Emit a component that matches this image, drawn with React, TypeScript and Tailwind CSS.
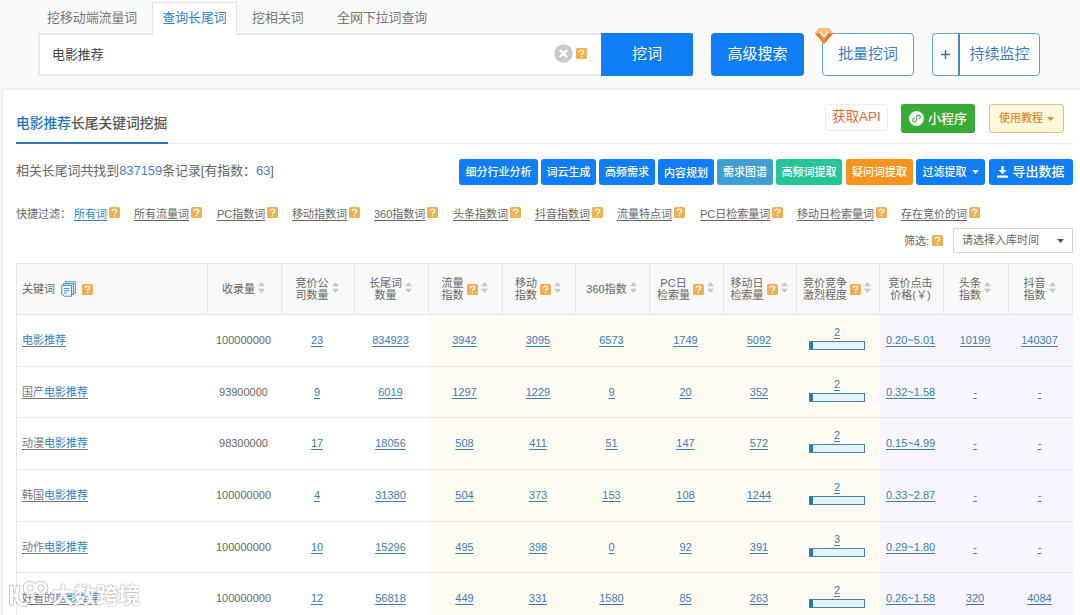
import React from "react";

const FONT = "font-['Liberation_Sans','Noto_Sans_CJK_SC',sans-serif]";

function Help({ className = "" }: { className?: string }) {
  return (
    <svg viewBox="0 0 11 11" className={"h-[11px] w-[11px] shrink-0 " + className}>
      <rect width="11" height="11" rx="1.6" fill="#f2ae50" />
      <path d="M3.3 4.2C3.3 1.4 7.8 1.5 7.7 4.1C7.6 5.5 5.5 5.3 5.5 7M5.5 8V9.5" fill="none" stroke="#fff3dc" strokeWidth="1.5" />
    </svg>
  );
}

function Sort() {
  return (
    <svg viewBox="0 0 7 11" className="-mt-[3px] h-[11px] w-[7px] shrink-0" fill="#c6c6c6">
      <path d="M3.5 0L7 4.2H0ZM3.5 11L0 6.8H7Z" />
    </svg>
  );
}

function Caret({ className = "" }: { className?: string }) {
  return (
    <svg viewBox="0 0 7 4" className={"h-[4px] w-[7px] shrink-0 " + className} fill="currentColor">
      <path d="M0 0H7L3.5 4Z" />
    </svg>
  );
}

const filters: [string, string][] = [
  ["所有词", "w-[60px]"],
  ["所有流量词", "w-[83px]"],
  ["PC指数词", "w-[75px]"],
  ["移动指数词", "w-[82px]"],
  ["360指数词", "w-[79px]"],
  ["头条指数词", "w-[82px]"],
  ["抖音指数词", "w-[82px]"],
  ["流量特点词", "w-[83px]"],
  ["PC日检索量词", "w-[97px]"],
  ["移动日检索量词", "w-[104px]"],
  ["存在竞价的词", "w-[90px]"],
];

const GRID = "grid grid-cols-[191px_74px_73px_74px_74px_73px_74px_74px_73px_83px_64px_65px_64px]";

const heads: { lines: string[]; help?: boolean; sort?: boolean }[] = [
  { lines: ["收录量"], sort: true },
  { lines: ["竞价公", "司数量"], sort: true },
  { lines: ["长尾词", "数量"], sort: true },
  { lines: ["流量", "指数"], help: true, sort: true },
  { lines: ["移动", "指数"], help: true, sort: true },
  { lines: ["360指数"], sort: true },
  { lines: ["PC日", "检索量"], help: true, sort: true },
  { lines: ["移动日", "检索量"], help: true, sort: true },
  { lines: ["竞价竞争", "激烈程度"], help: true, sort: true },
  { lines: ["竞价点击", "价格(￥)"] },
  { lines: ["头条", "指数"], sort: true },
  { lines: ["抖音", "指数"], sort: true },
];

const rows: { pre: string; h: string; v: string[] }[] = [
  { pre: "", h: "h-[52px]", v: ["100000000", "23", "834923", "3942", "3095", "6573", "1749", "5092", "2", "0.20~5.01", "10199", "140307"] },
  { pre: "国产", h: "h-[51px]", v: ["93900000", "9", "6019", "1297", "1229", "9", "20", "352", "2", "0.32~1.58", "-", "-"] },
  { pre: "动漫", h: "h-[52px]", v: ["98300000", "17", "18056", "508", "411", "51", "147", "572", "2", "0.15~4.99", "-", "-"] },
  { pre: "韩国", h: "h-[52px]", v: ["100000000", "4", "31380", "504", "373", "153", "108", "1244", "2", "0.33~2.87", "-", "-"] },
  { pre: "动作", h: "h-[51px]", v: ["100000000", "10", "15296", "495", "398", "0", "92", "391", "3", "0.29~1.80", "-", "-"] },
  { pre: "好看的", h: "h-[52px]", v: ["100000000", "12", "56818", "449", "331", "1580", "85", "263", "2", "0.26~1.58", "320", "4084"] },
];

function Cell({ value, index }: { value: string; index: number }) {
  if (index === 0) {
    return <div className="flex items-center justify-center pr-[3px] text-[#666]">{value}</div>;
  }
  if (index === 8) {
    return (
      <div className="flex flex-col items-center bg-[#fffbf3] pt-[10px] pr-[3px]">
        <span className="leading-[15px] underline underline-offset-2">{value}</span>
        <div className="mt-[1px] flex h-[9px] w-[56px] border border-[#3f83b8] bg-[#e6f2f8]">
          <div className="w-[3px] bg-[#2a74b4]" />
        </div>
      </div>
    );
  }
  const bg = index >= 9 ? "bg-[#f9f5fe]" : index >= 3 ? "bg-[#fffbf3]" : "";
  return (
    <div className={"flex items-center justify-center pr-[3px] " + bg}>
      <span className="underline underline-offset-2">{value}</span>
    </div>
  );
}

function ActionButton({ className, children }: { className: string; children: React.ReactNode }) {
  return (
    <button className={"flex h-[26px] items-center justify-center rounded-[3px] text-[11px] font-medium text-white " + className}>
      {children}
    </button>
  );
}

export default function App() {
  return (
    <div className={"relative flex h-[615px] w-[1080px] flex-col overflow-hidden bg-[#fafafa] text-[11px] whitespace-nowrap text-[#666] " + FONT}>
      <header className="h-[89px] shrink-0 pl-[38px]">
        <nav className="flex h-[33px] items-end text-[12.9px] text-[#777]">
          <span className="w-[114px] pl-[9px] leading-[31px]">挖移动端流量词</span>
          <span className="relative z-10 -mb-[2px] h-[33px] w-[85px] border border-b-0 border-[#e2e2e2] bg-white text-center leading-[30px] text-[#2b83cf]">查询长尾词</span>
          <span className="w-[100px] pl-[15px] leading-[31px]">挖相关词</span>
          <span className="leading-[31px]">全网下拉词查询</span>
        </nav>
        <div className="flex h-[43px]">
          <div className="flex w-[563px] items-center border-2 border-r-0 border-[#e8e8e8] bg-white pr-[14px] pl-[12px]">
            <span className="flex-1 text-[12.9px] text-[#444]">电影推荐</span>
            <svg viewBox="0 0 19 19" className="-mt-[3px] mr-[3px] h-[19px] w-[19px]">
              <circle cx="9.5" cy="9.5" r="9.2" fill="#c9c9c9" />
              <path d="M5.8 5.8L13.2 13.2M13.2 5.8L5.8 13.2" stroke="#fff" strokeWidth="2.4" />
            </svg>
            <Help className="-mt-[2px]" />
          </div>
          <button className="w-[92px] rounded-r-[2px] bg-[#0f7df5] text-[15px] text-white">挖词</button>
          <button className="ml-[18px] w-[93px] rounded-[4px] bg-[#0f7df5] text-[15px] text-white">高级搜索</button>
          <button className="relative ml-[18px] w-[92px] rounded-[4px] border border-[#62a1d4] bg-white text-[15px] text-[#3a7fc6]">
            批量挖词
            <svg viewBox="0 0 18 16" className="absolute -top-[6px] -left-[8px] h-[16px] w-[18px]">
              <path d="M4 0H14L18 5.5L9 16L0 5.5Z" fill="#ef9a41" />
              <path d="M4 0H14L18 5.5H0Z" fill="#f9c07a" />
              <path d="M0 5.5H5L9 16Z" fill="#e5853a" />
              <path d="M18 5.5H13L9 16Z" fill="#d97432" />
              <path d="M5.3 4.5L9 8.4L12.7 4.5" fill="none" stroke="#fff6e6" strokeWidth="1.8" />
            </svg>
          </button>
          <button className="ml-[18px] flex w-[108px] items-center rounded-[4px] border border-[#62a1d4] bg-white text-[15px] text-[#3a7fc6]">
            <span className="flex h-full w-[27px] items-center justify-center border-r-2 border-[#4389c2]">
              <svg viewBox="0 0 9 9" className="h-[9px] w-[9px]"><path d="M4.5 0V9M0 4.5H9" stroke="#3478b8" strokeWidth="1.5" /></svg>
            </span>
            <span className="flex-1 text-center">持续监控</span>
          </button>
        </div>
      </header>

      <main className="ml-[2px] flex-1 border-t border-l border-[#ededed] bg-white pr-[7px] pl-[13px] shadow-[0_0_3px_#e2e2e2]">
        <div className="flex h-[54px] items-start border-b border-[#ececec]">
          <h1 className="h-[54px] w-[152px] border-b-2 border-[#2878c3] text-[13.75px] leading-[68px] font-medium text-[#555]">
            <span className="text-[#1f75c4]">电影推荐</span>长尾关键词挖掘
          </h1>
          <button className="mt-[14px] ml-auto h-[27px] w-[63px] rounded-[3px] border border-[#ececec] text-[13.4px] text-[#e0693c]">获取API</button>
          <button className="mt-[14px] ml-[13px] flex h-[29px] w-[74px] items-center justify-center gap-[4px] rounded-[3px] bg-[#37ab35] text-[13px] font-medium text-white">
            <svg viewBox="0 0 15 15" className="h-[15px] w-[15px]">
              <circle cx="7.5" cy="7.5" r="7.5" fill="#f2faf2" />
              <path d="M5.6 7.2C3.2 7.4 3 10.7 5.5 10.8C7 10.8 7.5 9.7 7.5 8.7V6.3C7.5 5.2 8.2 4.2 9.5 4.2C12 4.3 11.8 7.6 9.4 7.8" fill="none" stroke="#69b868" strokeWidth="1.2" />
            </svg>
            小程序
          </button>
          <button className="mt-[14px] mr-[9px] ml-[14px] flex h-[29px] w-[75px] items-center justify-center gap-[4px] rounded-[3px] border-[1.5px] border-[#e6c06c] bg-[#fff8df] text-[11px] font-medium text-[#e08c24]">
            使用教程<Caret />
          </button>
        </div>

        <div className="flex h-[56px] items-center">
          <p className="mt-[-3px] flex-1 text-[12.9px]">
            相关长尾词共找到<span className="text-[#3b82cb]">837159</span>条记录[有指数：<span className="text-[#3b82cb]">63</span>]
          </p>
          <ActionButton className="mr-[3px] w-[79px] bg-[#0f7df5]">细分行业分析</ActionButton>
          <ActionButton className="mr-[3px] w-[55px] bg-[#0f7df5]">词云生成</ActionButton>
          <ActionButton className="mr-[3px] w-[56px] bg-[#0f7df5]">高频需求</ActionButton>
          <ActionButton className="mr-[3px] w-[56px] bg-[#0f7df5] pt-[2px]">内容规划</ActionButton>
          <ActionButton className="mr-[3px] w-[56px] bg-[#3f9ed3]">需求图谱</ActionButton>
          <ActionButton className="mr-[4px] w-[66px] bg-[#27c498]">高频词提取</ActionButton>
          <ActionButton className="mr-[3px] w-[67px] bg-[#f8931f]">疑问词提取</ActionButton>
          <ActionButton className="mr-[4px] w-[69px] gap-[5px] bg-[#0f7df5]">过滤提取<Caret /></ActionButton>
          <ActionButton className="w-[84px] gap-[4px] bg-[#0f7df5] text-[13px]">
            <svg viewBox="0 0 11 12" className="h-[12px] w-[11px]" fill="#fff">
              <path d="M4.2 0H6.8V4H9.5L5.5 8.3L1.5 4H4.2ZM0 9.5H11V11.8H0Z" />
            </svg>
            导出数据
          </ActionButton>
        </div>

        <div className="flex h-[28px] items-center">
          <span className="w-[58px]">快捷过滤：</span>
          {filters.map(([label, w], i) => (
            <span key={label} className={"flex shrink-0 items-center gap-[2px] " + w}>
              <a className={"underline underline-offset-2 " + (i === 0 ? "text-[#2b83cf]" : "")}>{label}</a>
              <Help className="-mt-[3px]" />
            </span>
          ))}
        </div>

        <div className="flex h-[35px] items-start justify-end">
          <span className="mt-[5px] leading-[17px]">筛选:</span>
          <Help className="mt-[7px] mr-[10px] ml-[3px]" />
          <div className="flex h-[25px] w-[120px] items-center justify-between border border-[#d4d4d4] pr-[8px] pl-[8px]">
            <span>请选择入库时间</span>
            <Caret className="text-[#555]" />
          </div>
        </div>

        <section className="w-[1057px] border-l border-[#e6e6e6]">
          <div className={GRID + " h-[52px] border-t border-b border-[#e4e4e4] bg-[#f9f9f9]"}>
            <div className="flex items-center border-r border-[#e6e6e6] pl-[5px]">
              <span>关键词</span>
              <svg viewBox="0 0 15 16" className="mr-[6px] ml-[6px] h-[16px] w-[15px]" fill="#eef7fd" stroke="#4a9bd1" strokeWidth="1.1">
                <path d="M4.5 3V.7H14.3V12H11.5" />
                <path d="M2.6 5V2.6H12.4V13.5H10.5" />
                <path d="M.7 4.5H10.5V15.3H3.2L.7 12.8Z" />
                <path d="M2.8 7.5H8.4M2.8 9.8H8.4M2.8 12H6" />
              </svg>
              <Help />
            </div>
            {heads.map((h, i) => (
              <div key={i} className="flex items-center justify-center gap-[3px] border-r border-[#e6e6e6] pr-[2px]">
                <span className="text-center leading-[12.5px]">
                  {h.lines.map((l) => (
                    <span key={l} className="block">{l}</span>
                  ))}
                </span>
                {h.help && <Help />}
                {h.sort && <Sort />}
              </div>
            ))}
          </div>
          {rows.map((r, i) => (
            <div key={i} className={GRID + " border-b border-[#e6e6e6] text-[#3a7db8] " + r.h}>
              <div className="flex items-center pl-[5px]">
                <a className="text-[#777] underline underline-offset-2">
                  {r.pre}
                  <span className="text-[#3082c8]">电影推荐</span>
                </a>
              </div>
              {r.v.map((v, j) => (
                <Cell key={j} value={v} index={j} />
              ))}
            </div>
          ))}
        </section>
      </main>

      <div className="absolute top-[581px] left-[8px] flex items-center opacity-90">
        <svg viewBox="0 0 44 30" className="h-[30px] w-[44px] overflow-visible" fill="none" strokeLinecap="round" strokeLinejoin="round">
          <g stroke="#b4b4b4" strokeWidth="4.6">
            <path d="M3.5 6V23M4 15C9 15 10 11 10 6M9 13C8 20 12 25 18 23" />
            <circle cx="22" cy="7" r="5" />
            <circle cx="33" cy="7" r="5" />
          </g>
          <g stroke="#fff" strokeWidth="3.2">
            <path d="M3.5 6V23M4 15C9 15 10 11 10 6M9 13C8 20 12 25 18 23" />
            <circle cx="22" cy="7" r="5" />
            <circle cx="33" cy="7" r="5" />
          </g>
        </svg>
        <span className="text-[22px] leading-[30px] font-bold text-white [text-shadow:0_0_2px_#999,0_0_1px_#999]">大数跨境</span>
      </div>
    </div>
  );
}
